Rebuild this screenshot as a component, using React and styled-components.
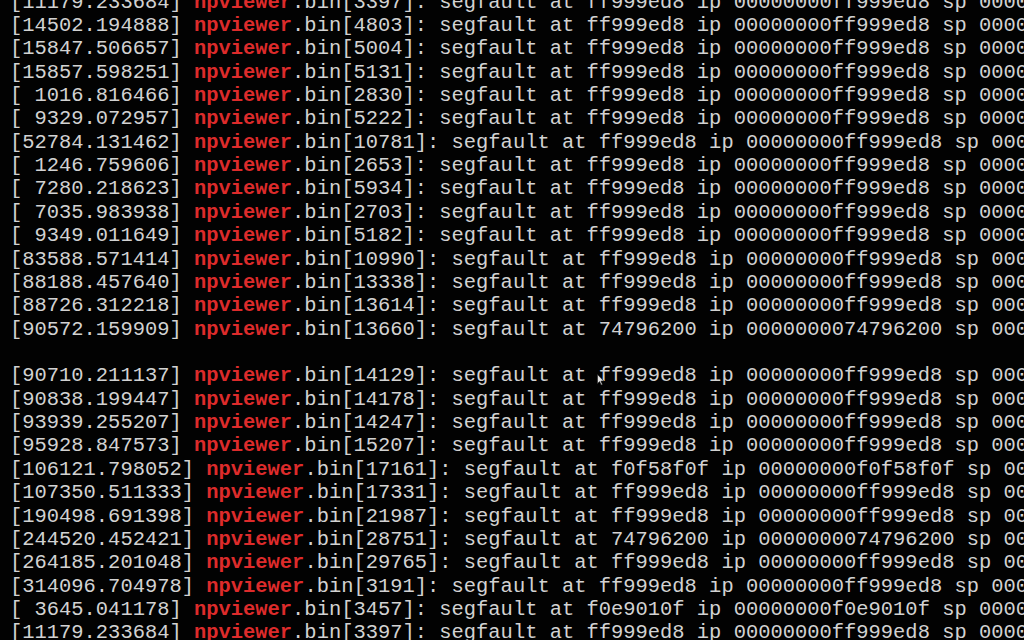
import React from 'react'
import styled, { createGlobalStyle } from 'styled-components'

const GlobalStyle = createGlobalStyle`
    html, body {
        margin: 0;
        padding: 0;
        background: #000;
    }
`;

// [timestamp, pid, fault addr, stack tail]
const lines = [
    ['11179.233684', '3397', 'ff999ed8', '0000'],
    ['14502.194888', '4803', 'ff999ed8', '0000'],
    ['15847.506657', '5004', 'ff999ed8', '0000'],
    ['15857.598251', '5131', 'ff999ed8', '0000'],
    [' 1016.816466', '2830', 'ff999ed8', '0000'],
    [' 9329.072957', '5222', 'ff999ed8', '0000'],
    ['52784.131462', '10781', 'ff999ed8', '000'],
    [' 1246.759606', '2653', 'ff999ed8', '0000'],
    [' 7280.218623', '5934', 'ff999ed8', '0000'],
    [' 7035.983938', '2703', 'ff999ed8', '0000'],
    [' 9349.011649', '5182', 'ff999ed8', '0000'],
    ['83588.571414', '10990', 'ff999ed8', '000'],
    ['88188.457640', '13338', 'ff999ed8', '000'],
    ['88726.312218', '13614', 'ff999ed8', '000'],
    ['90572.159909', '13660', '74796200', '000'],
    null,
    ['90710.211137', '14129', 'ff999ed8', '000'],
    ['90838.199447', '14178', 'ff999ed8', '000'],
    ['93939.255207', '14247', 'ff999ed8', '000'],
    ['95928.847573', '15207', 'ff999ed8', '000'],
    ['106121.798052', '17161', 'f0f58f0f', '00'],
    ['107350.511333', '17331', 'ff999ed8', '00'],
    ['190498.691398', '21987', 'ff999ed8', '00'],
    ['244520.452421', '28751', '74796200', '00'],
    ['264185.201048', '29765', 'ff999ed8', '00'],
    ['314096.704978', '3191', 'ff999ed8', '000'],
    [' 3645.041178', '3457', 'f0e9010f', '0000'],
    ['11179.233684', '3397', 'ff999ed8', '0000'],
];

function App() {
    return (
        <>
            <GlobalStyle />
            <Terminal>
                <Output>
                    {lines.map((l, i) =>
                        l ? (
                            <Line key={i}>
                                [{l[0]}] <Proc>npviewer</Proc>.bin[{l[1]}]: segfault at {l[2]} ip 00000000{l[2]} sp {l[3]}</Line>
                        ) : (
                            <Line key={i}>{' '}</Line>
                        )
                    )}
                </Output>
                <Pointer width="8" height="12" viewBox="0 0 8 12">
                    <path d="M0.5 0.5 L0.5 9.5 L2.6 7.6 L4.2 11 L5.4 10.4 L3.9 7.1 L6.8 7.1 Z" fill="#e8e8e8" stroke="#222" strokeWidth="0.6" />
                </Pointer>
            </Terminal>
        </>
    )
}

const Terminal = styled.div`
    position: relative;
    width: 1024px;
    height: 640px;
    overflow: hidden;
    background: #020202;
`;

const Output = styled.div`
    margin-top: -9.4px;
    padding-left: 10px;
    font-family: "Liberation Mono", "DejaVu Sans Mono", monospace;
    font-size: 20.45px;
    line-height: 23.36px;
    color: #d2d2d2;
`;

const Line = styled.div`
    white-space: pre;
    height: 23.36px;
`;

const Proc = styled.span`
    color: #dd2b2b;
    font-weight: bold;
`;

const Pointer = styled.svg`
    position: absolute;
    left: 597px;
    top: 374px;
`;

export default App
